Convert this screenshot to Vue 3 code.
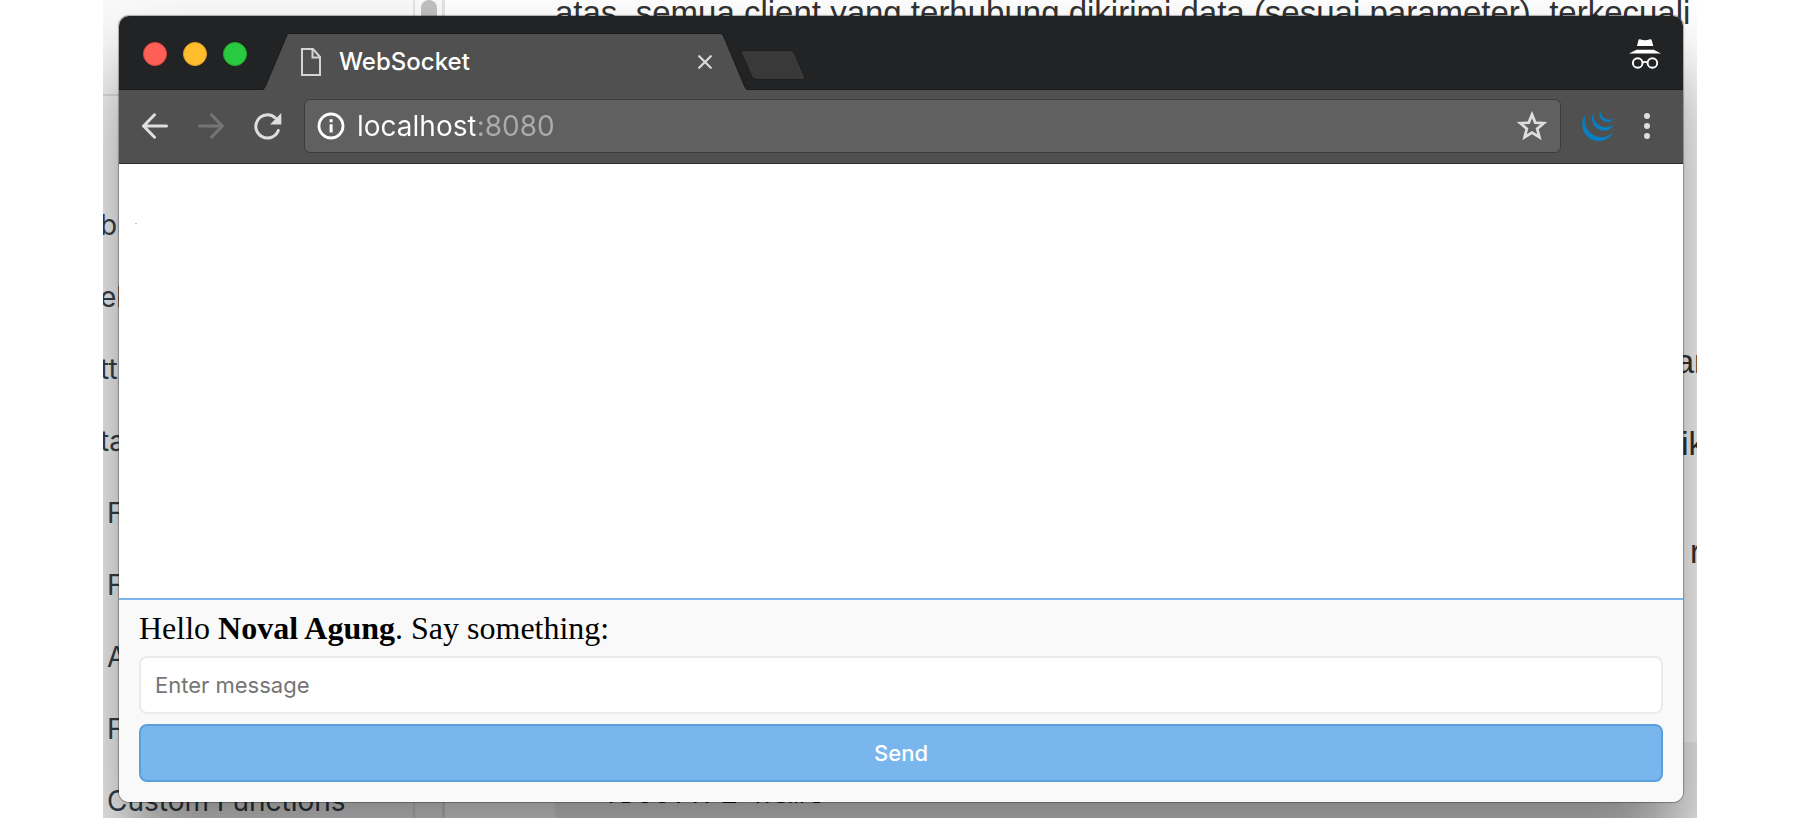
<script setup>
import { ref } from 'vue'

const chapters = [
  { text: 'b', cut: true },
  { text: 'el', cut: true },
  { text: 'tt', cut: true },
  { text: 'ta', cut: true },
  { text: 'F' },
  { text: 'F' },
  { text: 'A' },
  { text: 'F' },
  { text: 'Custom Functions' }
]
const address = ref('localhost:8080')
const message = ref('')
const userName = 'Noval Agung'
</script>

<template>
  <div class="desktop">
    <div class="docs">
      <div class="sidebar">
        <div class="search"></div>
        <ul class="chapters">
          <li v-for="(item, i) in chapters" :key="i" :class="{ cut: item.cut }">{{ item.text }}</li>
        </ul>
      </div>
      <div class="track"><div class="thumb"></div></div>
      <div class="article">
        <p class="lead">atas, semua client yang terhubung dikirimi data (sesuai parameter), terkecuali</p>
        <p class="tail first">ar</p>
        <p class="tail">ik</p>
        <p class="tail last">r</p>
        <pre class="code">&lt;!DOCTYPE html&gt;</pre>
      </div>
    </div>

    <main class="window">
      <header class="titlebar">
        <div class="lights">
          <button class="light red" aria-label="Close window"></button>
          <button class="light yellow" aria-label="Minimize window"></button>
          <button class="light green" aria-label="Zoom window"></button>
        </div>
        <div class="tab">
          <svg class="slant" width="27" height="57" viewBox="0 0 27 57">
            <path d="M0 57C2 56.500 2.500 55 3.500 53L24.500 3Q25.500 .5 27 .5V57Z" fill="#505050" />
            <path d="M0 56.500C2 56.500 2.500 55 3.500 53L24.500 3Q25.500 .5 27 .5" fill="none" stroke="#18191b" />
          </svg>
          <div class="tab-body">
            <svg width="20" height="28" viewBox="0 0 20 28" fill="none" stroke="#d4d4d4" stroke-width="2">
              <path d="M1 1H12L19 9V27H1Z" />
              <path d="M11.500 1V9.500H19" />
            </svg>
            <span class="tab-title">WebSocket</span>
            <button class="icon" aria-label="Close tab">
              <svg width="14" height="14" viewBox="0 0 14 14" stroke="#dadada" stroke-width="2.200" stroke-linecap="round">
                <path d="M1.200 1.200L12.800 12.800M12.800 1.200L1.200 12.800" />
              </svg>
            </button>
          </div>
          <svg class="slant" width="27" height="57" viewBox="0 0 27 57">
            <path d="M27 57C25 56.500 24.500 55 23.500 53L2.500 3Q1.500 .5 0 .5V57Z" fill="#505050" />
            <path d="M27 56.500C25 56.500 24.500 55 23.500 53L2.500 3Q1.500 .5 0 .5" fill="none" stroke="#18191b" />
          </svg>
        </div>
        <button class="icon new-tab" aria-label="New tab">
          <svg width="66" height="31" viewBox="0 0 66 31">
            <path d="M3 .5H50Q53 .5 54.500 3.500L64.500 27Q65.500 29.500 63 29.500H17Q13.500 29.500 12 26.500L1.500 3Q.5 .5 3 .5Z" fill="#393939" stroke="#1d1e20" />
          </svg>
        </button>
        <svg class="incognito" width="32" height="30" viewBox="0 0 32 30">
          <path d="M11 .3Q16 2.400 21 .3Q22.300 0 22.700 1.300L24.300 7H8L9.400 1.300Q9.800 0 11 .3Z" fill="#fff" />
          <path d="M7.500 10.800H24.800L32 14.600H0Z" fill="#fff" />
          <g fill="none" stroke="#fff" stroke-width="1.900">
            <circle cx="8.700" cy="24" r="4.800" />
            <circle cx="23.400" cy="24" r="4.800" />
            <path d="M13.400 23.800Q16 22 18.700 23.800" />
          </g>
        </svg>
      </header>

      <nav class="toolbar">
        <button class="icon" aria-label="Back">
          <svg width="26" height="26" viewBox="0 0 26 26" fill="none" stroke="#dedede" stroke-width="3" stroke-linecap="round">
            <path d="M24.500 13H2M12.500 1.800L1.700 13L12.500 24.200" />
          </svg>
        </button>
        <button class="icon" aria-label="Forward">
          <svg width="26" height="26" viewBox="0 0 26 26" fill="none" stroke="#757575" stroke-width="3" stroke-linecap="round">
            <path d="M1.500 13H24M13.500 1.800L24.300 13L13.500 24.200" />
          </svg>
        </button>
        <button class="icon" aria-label="Reload">
          <svg width="28" height="27" viewBox="0 0 28 27">
            <path d="M21.200 4.800A11.600 11.600 0 1 0 24.300 17.500" fill="none" stroke="#dedede" stroke-width="3" stroke-linecap="round" />
            <path d="M27.300 0V11.400H16Z" fill="#dedede" />
          </svg>
        </button>
        <div class="omnibox">
          <svg width="28" height="28" viewBox="0 0 28 28">
            <circle cx="14" cy="14" r="12" fill="none" stroke="#fff" stroke-width="2.800" />
            <path d="M12.600 7.300H15.600V10.300H12.600ZM12.600 12.200H15.600V20.500H12.600Z" fill="#fff" />
          </svg>
          <input v-model="address" class="address" type="text" aria-label="Address" />
          <button class="icon" aria-label="Bookmark this page">
            <svg width="30" height="30" viewBox="0 0 30 30">
              <path d="M15 3.600L18.200 11.600L26.800 12.200L20.200 17.800L22.400 26.200L15 21.600L7.600 26.200L9.800 17.800L3.200 12.200L11.800 11.600Z" fill="none" stroke="#dedede" stroke-width="2.800" />
            </svg>
          </button>
        </div>
        <button class="icon" aria-label="jQuery extension">
          <svg width="32" height="32" viewBox="0 0 32 32" fill="#0780c3">
            <path d="M3.300 4.500C-3.500 14.500 1.500 28.500 14 31C21.500 32 28.500 28.500 31 22.500C26 27.500 18.500 28.500 12 25.500C4.500 21.500 1.500 13 3.300 4.500Z" />
            <path d="M11.500 2.500C7.500 9.500 11.500 18 19 20.300C24.500 21.600 29.500 19.500 31.700 14.500C28 17.600 22.500 18 18 15.700C13 13 10.500 8 11.500 2.500Z" />
            <path d="M18.300 0C15.800 5 19 10.800 24 11.800C27.500 12.300 30 11.300 31.500 8.500C28.500 10.200 25.500 10 22.500 8.300C19.800 6.500 18 3.500 18.300 0Z" />
          </svg>
        </button>
        <button class="icon" aria-label="Menu">
          <svg width="6" height="26" viewBox="0 0 6 26" fill="#dedede">
            <circle cx="3" cy="3" r="3" />
            <circle cx="3" cy="13" r="3" />
            <circle cx="3" cy="23" r="3" />
          </svg>
        </button>
      </nav>

      <section class="log"><div class="entry"></div></section>

      <form class="composer" @submit.prevent="message = ''">
        <label for="message">Hello <b>{{ userName }}</b>. Say something:</label>
        <input id="message" v-model="message" type="text" placeholder="Enter message" />
        <button type="submit">Send</button>
      </form>
    </main>
  </div>
</template>

<style>
body {
  background: #fff;
}
</style>

<style scoped>
* {
  box-sizing: border-box;
}

button {
  cursor: pointer;
}

.desktop {
  position: relative;
  display: flex;
  height: 100vh;
  min-height: 560px;
  margin: 0 103px;
  padding: 16px 14px 16px 16px;
  overflow: hidden;
}

.docs {
  position: absolute;
  inset: 0;
  display: flex;
  overflow: hidden;
  background: #fff;
  font-family: "Liberation Sans", Arial, sans-serif;
}

.sidebar {
  flex: 0 0 310px;
  background: #fafafa;
}

.search {
  height: 96px;
  border-bottom: 2px solid #e0e0e0;
}

.chapters {
  margin: 0;
  padding: 93px 0 0 4px;
  list-style: none;
  color: #364149;
  font-family: Inter, sans-serif;
  font-size: 28px;
  line-height: 72px;
  white-space: nowrap;
}

.cut {
  margin-left: -7px;
}

.track {
  flex: 0 0 32px;
  border: solid #e4e4e4;
  border-width: 0 3px 0 2px;
  background: #fafafa;
}

.thumb {
  width: 16px;
  height: 300px;
  margin: 0 auto;
  border-radius: 8px;
  background: #c1c1c1;
}

.article {
  flex: 1;
  min-width: 0;
  padding-left: 110px;
  color: #333;
  font-size: 33px;
  line-height: 82px;
}

.article p {
  margin: 0 -8px 0 0;
}

.article .lead {
  margin-top: -28px;
  white-space: nowrap;
}

.tail {
  text-align: right;
}

.tail.first {
  padding-top: 267px;
}

.article .last {
  margin-right: -4px;
  padding-top: 26px;
}

.code {
  height: 100px;
  margin: 149px 0 0;
  padding: 34px 31px;
  background: #f1f1f1;
  color: #111;
  font: 28px/40px "Liberation Mono", monospace;
}

.window {
  position: relative;
  display: flex;
  flex: 1;
  flex-direction: column;
  min-width: 0;
  border-radius: 10px;
  background: #fff;
  box-shadow: 0 0 1px 1px rgba(0, 0, 0, 0.3), 0 55px 80px rgba(0, 0, 0, 0.48);
}

.titlebar {
  display: flex;
  align-items: flex-end;
  height: 74px;
  border-bottom: 1px solid #18191b;
  border-radius: 10px 10px 0 0;
  background: #222325;
}

.lights {
  display: flex;
  gap: 16px;
  padding: 0 15px 23px 24px;
}

.light {
  width: 24px;
  height: 24px;
  padding: 0;
  border: 1px solid;
  border-radius: 50%;
}

.red {
  border-color: #e0443e;
  background: #ff5f57;
}

.yellow {
  border-color: #dea123;
  background: #ffbd2e;
}

.green {
  border-color: #1dad2b;
  background: #28ca41;
}

.tab {
  display: flex;
  flex: 0 1 486px;
  height: 57px;
  margin-bottom: -1px;
}

.slant {
  flex: none;
}

.tab-body {
  display: flex;
  flex: 1;
  align-items: center;
  min-width: 0;
  padding: 0 9px 0 12px;
  border-top: 1px solid #18191b;
  background: #505050;
}

.tab-title {
  flex: 1;
  margin-left: 18px;
  color: #fff;
  font: 500 24px/32px Inter, sans-serif;
}

.icon {
  display: flex;
  flex: none;
  padding: 0;
  border: 0;
  background: none;
}

.new-tab {
  margin: 0 auto 8px -8px;
}

.incognito {
  margin: 0 22px 20px 0;
}

.toolbar {
  display: flex;
  align-items: center;
  gap: 30px;
  height: 74px;
  padding: 0 33px 1px 23px;
  border-bottom: 1px solid #2b2b2b;
  background: #505050;
}

.omnibox {
  display: flex;
  flex: 1;
  align-items: center;
  min-width: 0;
  height: 54px;
  margin: 0 -9px 0 -8px;
  padding: 0 13px 0 12px;
  border: 1px solid #3b3b3b;
  border-radius: 6px;
  background: #606060;
}

.address {
  flex: 1;
  min-width: 0;
  margin-left: 12px;
  padding: 0;
  border: 0;
  outline: 0;
  background: linear-gradient(90deg, #fff 118px, #ababab 118px);
  background-clip: text;
  color: transparent;
  caret-color: #fff;
  font: 28px/40px Inter, sans-serif;
}

.log {
  flex: 1;
  padding: 59px 16px;
}

.entry {
  width: 2px;
  height: 1px;
  background: #c4c4b4;
}

.composer {
  display: flex;
  flex-direction: column;
  gap: 10px;
  padding: 10px 20px 20px;
  border-top: 2px solid #79b6ed;
  border-radius: 0 0 10px 10px;
  background: #f9f9f9;
}

.composer label {
  color: #000;
  font: 32px/36px "Liberation Serif", "Times New Roman", serif;
}

.composer input,
.composer button {
  height: 58px;
  border: 2px solid #ebebeb;
  border-radius: 8px;
  font: 22px/28px Inter, sans-serif;
}

.composer input {
  padding: 0 14px;
  background: #fff;
  color: #333;
}

.composer input::placeholder {
  color: #757575;
}

.composer button {
  border-color: #5a9edb;
  background: #79b6ee;
  color: #fff;
  font-weight: 500;
}
</style>
